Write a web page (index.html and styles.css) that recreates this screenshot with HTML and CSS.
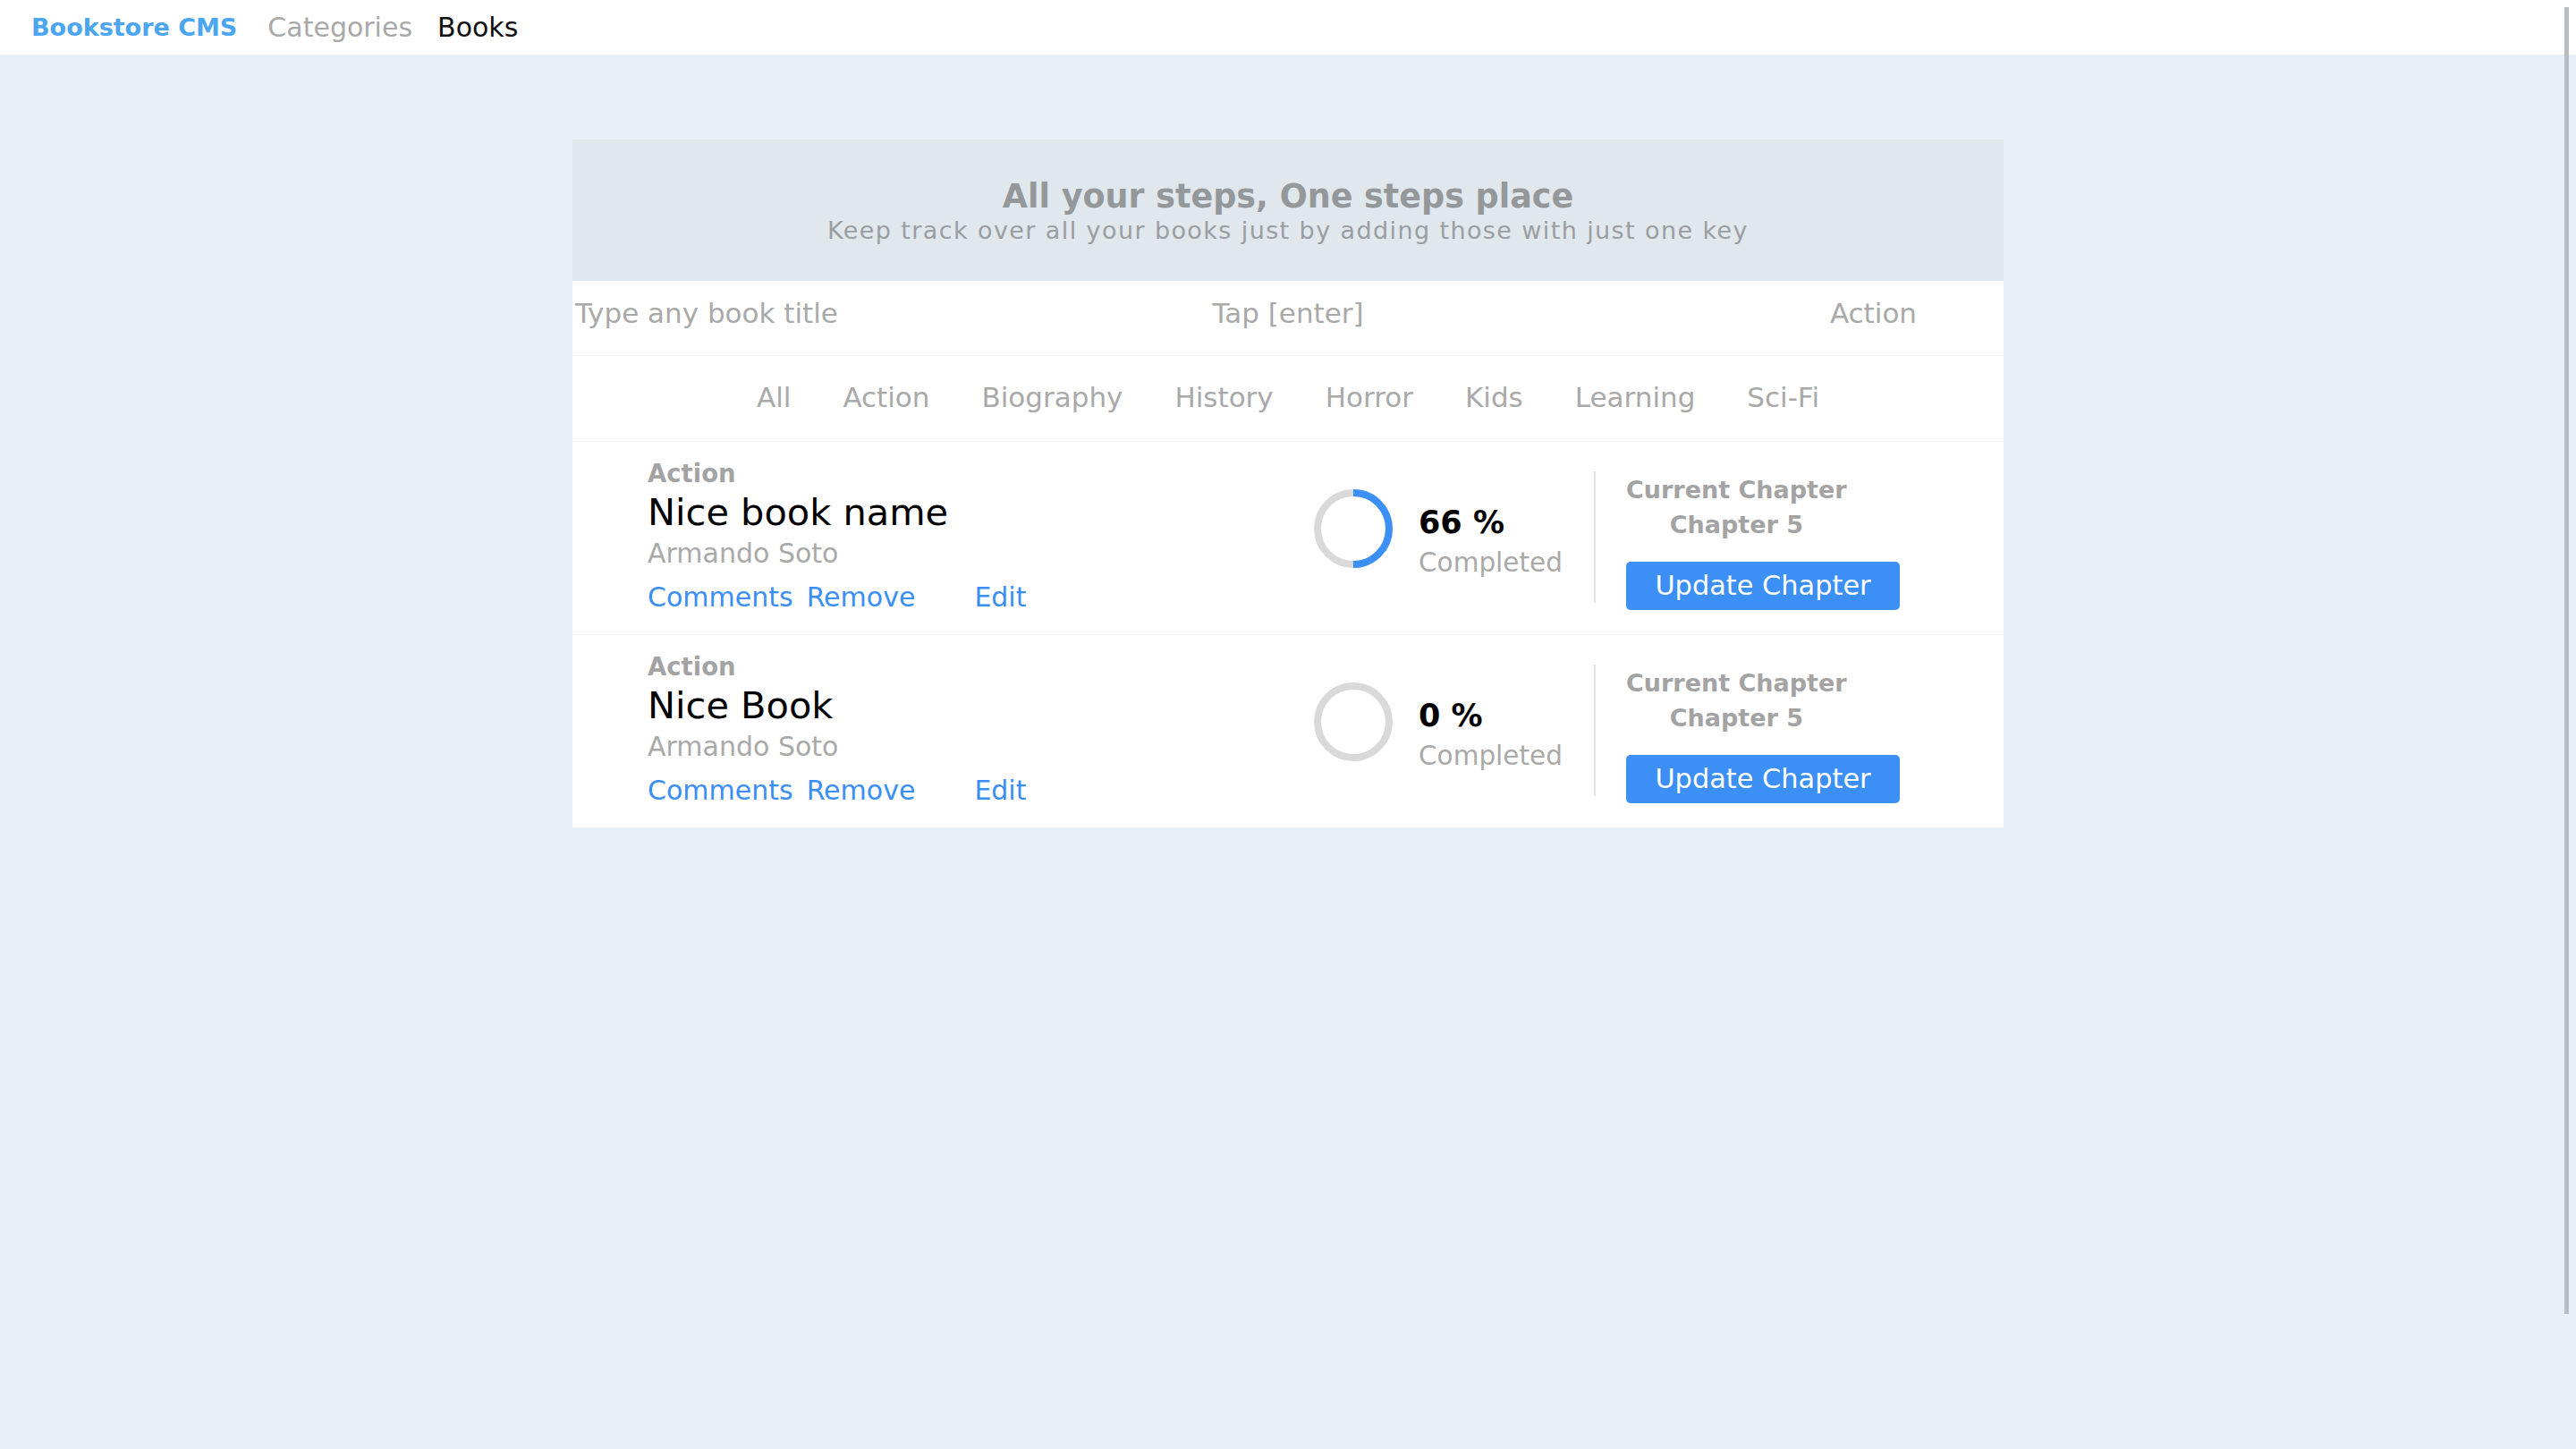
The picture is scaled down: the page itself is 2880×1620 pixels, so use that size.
FILE: index.html
```html
<!DOCTYPE html>
<html lang="en">
<head>
<meta charset="utf-8">
<title>Bookstore CMS</title>
<link rel="stylesheet" href="styles.css">
</head>
<body>
<nav class="navbar">
  <span class="brand">Bookstore CMS</span>
  <ul class="nav-links">
    <li class="nav-link">Categories</li>
    <li class="nav-link active">Books</li>
  </ul>
</nav>
<main class="page">
  <section class="card">
    <header class="hero">
      <h1 class="hero-title">All your steps, One steps place</h1>
      <p class="hero-sub">Keep track over all your books just by adding those with just one key</p>
    </header>
    <form class="search-row">
      <span class="search-input">Type any book title</span>
      <span class="search-hint">Tap [enter]</span>
      <span class="search-cat">Action</span>
    </form>
    <ul class="categories">
      <li>All</li>
      <li>Action</li>
      <li>Biography</li>
      <li>History</li>
      <li>Horror</li>
      <li>Kids</li>
      <li>Learning</li>
      <li>Sci-Fi</li>
    </ul>
    <ul class="books">
      <li class="book">
        <div class="book-info">
          <p class="book-genre">Action</p>
          <h2 class="book-title">Nice book name</h2>
          <p class="book-author">Armando Soto</p>
          <div class="book-actions">
            <span class="action comments">Comments</span>
            <span class="action remove">Remove</span>
            <span class="action">Edit</span>
          </div>
        </div>
        <div class="progress">
          <svg class="ring" width="88" height="88" viewBox="0 0 88 88">
            <circle cx="44" cy="44" r="40" fill="none" stroke="#d9d9d9" stroke-width="8"/>
            <path d="M44 4 A40 40 0 0 1 44 84" fill="none" stroke="#3b8ff5" stroke-width="8"/>
          </svg>
          <div class="progress-text">
            <p class="percent">66 %</p>
            <p class="completed">Completed</p>
          </div>
        </div>
        <div class="divider"></div>
        <div class="chapter">
          <div class="chapter-info">
            <p class="chapter-label">Current Chapter</p>
            <p class="chapter-name">Chapter 5</p>
          </div>
          <button class="btn-update" type="button">Update Chapter</button>
        </div>
      </li>
      <li class="book">
        <div class="book-info">
          <p class="book-genre">Action</p>
          <h2 class="book-title">Nice Book</h2>
          <p class="book-author">Armando Soto</p>
          <div class="book-actions">
            <span class="action comments">Comments</span>
            <span class="action remove">Remove</span>
            <span class="action">Edit</span>
          </div>
        </div>
        <div class="progress">
          <svg class="ring" width="88" height="88" viewBox="0 0 88 88">
            <circle cx="44" cy="44" r="40" fill="none" stroke="#d9d9d9" stroke-width="8"/>
          </svg>
          <div class="progress-text">
            <p class="percent">0 %</p>
            <p class="completed">Completed</p>
          </div>
        </div>
        <div class="divider"></div>
        <div class="chapter">
          <div class="chapter-info">
            <p class="chapter-label">Current Chapter</p>
            <p class="chapter-name">Chapter 5</p>
          </div>
          <button class="btn-update" type="button">Update Chapter</button>
        </div>
      </li>
    </ul>
  </section>
</main>
<div class="scroll-thumb"></div>
</body>
</html>
```
FILE: styles.css
```css
* { box-sizing: border-box; }

html, body {
  margin: 0;
  padding: 0;
}

body {
  background: #e8eff7;
  font-family: "DejaVu Sans", "Liberation Sans", sans-serif;
  color: #000;
  min-height: 1620px;
}

p, h1, h2, ul { margin: 0; padding: 0; }
ul { list-style: none; }

/* Navbar */
.navbar {
  height: 61px;
  background: #fff;
  display: flex;
  align-items: center;
  padding-left: 35px;
}

.brand {
  font-size: 27px;
  font-weight: bold;
  color: #4ba5ef;
  margin-right: 34px;
}

.nav-links {
  display: flex;
  gap: 28px;
}

.nav-link {
  font-size: 30px;
  color: #a9a9a9;
}

.nav-link.active { color: #111; }

/* Page */
.page {
  display: flex;
  justify-content: center;
  padding-top: 95px;
}

.card {
  width: 1600px;
  background: #fff;
}

/* Hero */
.hero {
  background: #e0e7ed;
  padding: 44px 0 38px;
  text-align: center;
}

.hero-title {
  font-size: 36.5px;
  line-height: 40px;
  font-weight: bold;
  color: #94989b;
}

.hero-sub {
  font-size: 27px;
  line-height: 36px;
  letter-spacing: 1.4px;
  color: #9a9ea2;
}

/* Search row */
.search-row {
  margin: 0;
  display: grid;
  grid-template-columns: 1fr auto 1fr;
  padding: 17.5px 3px 29.5px 3px;
  border-bottom: 1px solid #f3f4f5;
  font-size: 31px;
  line-height: 36px;
  color: #a9a9a9;
}

.search-hint { justify-self: center; }
.search-cat { justify-self: end; margin-right: 94px; }

/* Categories */
.categories {
  display: flex;
  justify-content: center;
  gap: 58px;
  padding: 27.5px 0 31.5px;
  border-bottom: 1px solid #f3f4f5;
  font-size: 31px;
  line-height: 36px;
  color: #a9a9a9;
}

/* Books */
.book {
  display: flex;
  align-items: flex-start;
  padding: 16.5px 116px 21.5px 84px;
  border-bottom: 1px solid #f3f4f5;
}

.book:last-child { border-bottom: none; }

.book-info {
  flex: 1;
}

.book-genre {
  font-size: 27.5px;
  line-height: 36px;
  font-weight: bold;
  color: #a3a3a3;
}

.book-title {
  font-size: 41.5px;
  line-height: 52px;
  font-weight: normal;
  color: #000;
}

.book-author {
  font-size: 30px;
  line-height: 40px;
  color: #a9a9a9;
}

.book-actions {
  display: flex;
  margin-top: 9px;
  font-size: 30px;
  line-height: 40px;
}

.action { color: #3a8ef6; }
.action.comments { margin-right: 15px; }
.action.remove { margin-right: 66px; }

/* Progress */
.progress {
  width: 280px;
  display: flex;
  align-items: flex-start;
  gap: 29px;
  margin-top: 36.5px;
}

.ring { flex: none; display: block; }

.progress-text { margin-top: 14.9px; }

.percent {
  font-size: 35px;
  line-height: 44px;
  font-weight: bold;
  color: #000;
}

.completed {
  font-size: 29.5px;
  line-height: 46px;
  color: #a9a9a9;
}

.divider {
  width: 2px;
  height: 147px;
  margin: 16.5px 34px 0 33px;
  background: #e4e4e4;
}

/* Chapter */
.chapter {
  width: 306px;
  display: flex;
  flex-direction: column;
  align-items: flex-start;
  margin-top: 18px;
}

.chapter-info { text-align: center; }

.chapter-label {
  font-size: 27px;
  line-height: 38px;
  font-weight: bold;
  color: #a3a3a3;
}

.chapter-name {
  font-size: 27px;
  line-height: 40px;
  font-weight: bold;
  color: #a3a3a3;
}

.btn-update {
  margin-top: 21.5px;
  width: 306px;
  height: 54px;
  border: none;
  border-radius: 5px;
  background: #3b8ff5;
  color: #fff;
  font-family: inherit;
  font-size: 30.4px;
  line-height: 54px;
  padding: 0;
}

/* Overlay scrollbar thumb */
.scroll-thumb {
  position: fixed;
  top: 8px;
  right: 8px;
  width: 5px;
  height: 1461px;
  background: #b9bcc0;
}
```
